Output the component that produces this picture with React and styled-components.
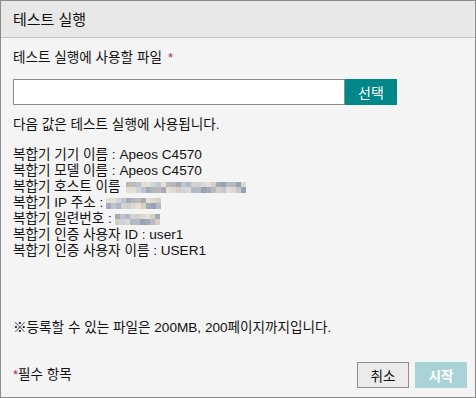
import React from "react";
import styled, { createGlobalStyle } from "styled-components";

const Global = createGlobalStyle`
  html, body { margin: 0; padding: 0; background: #f4f4f4; }
  * { box-sizing: border-box; }
  body { font-family: "Liberation Sans", "Noto Sans CJK KR", sans-serif; color: #111; }
`;

const Dialog = styled.div`
  width: 476px;
  height: 398px;
  border: 1px solid #8c8c8c;
  background: #f4f4f4;
  display: flex;
  flex-direction: column;
`;

const Header = styled.div`
  height: 37px;
  flex: none;
  background: #e8e8e8;
  border-bottom: 1px solid #c6c6c6;
  display: flex;
  align-items: center;
  padding: 0 12px 1px;
  font-size: 15px;
  color: #111;
`;

const Body = styled.div`
  flex: 1;
  display: flex;
  flex-direction: column;
  padding: 12px 8px 9px 12px;
`;

const Line = styled.div`
  font-size: 13.6px;
  line-height: 16px;
  height: 16px;
  white-space: nowrap;
  margin-top: ${(p) => p.$mt || 0}px;
  display: flex;
  align-items: center;
`;

const Req = styled.span`
  color: #b0245a;
  margin-left: ${(p) => p.$ml || 0}px;
  font-size: 13px;
`;

const FileRow = styled.div`
  display: flex;
  margin-top: 13px;
  height: 26px;
`;

const FileInput = styled.div`
  width: 332px;
  height: 26px;
  background: #fff;
  border: 1px solid #8c8c8c;
`;

const SelectBtn = styled.button`
  width: 52px;
  height: 26px;
  border: none;
  background: #00878a;
  color: #fff;
  font-family: inherit;
  font-size: 14px;
  padding: 0;
`;

const List = styled.div`
  margin-top: 14px;
  display: flex;
  flex-direction: column;
`;

const Mosaic = styled.span`
  display: inline-flex;
  flex-direction: column;
  height: 11px;
  margin-left: ${(p) => p.$ml || 0}px;
`;

const MosaicRow = styled.span`
  display: flex;
  height: 5.5px;
`;

const Cell = styled.span`
  width: 5px;
  height: 100%;
`;

const Spacer = styled.div`
  flex: 1;
`;

const Footer = styled.div`
  display: flex;
  align-items: center;
  margin-top: 26px;
  height: 26px;
`;

const Btn = styled.button`
  width: 52px;
  height: 26px;
  margin-left: ${(p) => p.$ml || 0}px;
  font-family: inherit;
  font-size: 13.6px;
  padding: 0;
  border: ${(p) => (p.$primary ? "none" : "1px solid #8c8c8c")};
  background: ${(p) => (p.$primary ? "#a9d3d6" : "#ebebeb")};
  color: ${(p) => (p.$primary ? "#ffffff" : "#111")};
  font-weight: ${(p) => (p.$primary ? 700 : 400)};
`;

const palette = ["#c6c8d0", "#b4bac6", "#dcd8d2", "#a4aab8", "#ced4dc", "#c2b8b0", "#e2ddd6", "#98a2b2", "#d6cfc4", "#b0b8c4", "#e6e0d4", "#bcc4cf"];

function Blur({ width, ml, seed }) {
  const n = Math.round(width / 5);
  const rows = [0, 1].map((r) =>
    Array.from({ length: n }, (_, i) => palette[(i * 7 + r * 5 + seed * 5 + ((i * i) % 5)) % palette.length])
  );
  return (
    <Mosaic $ml={ml}>
      {rows.map((row, r) => (
        <MosaicRow key={r}>
          {row.map((c, i) => (
            <Cell key={i} style={{ background: c }} />
          ))}
        </MosaicRow>
      ))}
    </Mosaic>
  );
}

export default function App() {
  return (
    <>
      <Global />
      <Dialog>
        <Header>테스트 실행</Header>
        <Body>
          <Line>
            테스트 실행에 사용할 파일<Req $ml={6}>*</Req>
          </Line>
          <FileRow>
            <FileInput />
            <SelectBtn>선택</SelectBtn>
          </FileRow>
          <Line $mt={12}>다음 값은 테스트 실행에 사용됩니다.</Line>
          <List>
            <Line>복합기 기기 이름 : Apeos C4570</Line>
            <Line>복합기 모델 이름 : Apeos C4570</Line>
            <Line>
              복합기 호스트 이름<Blur width={120} ml={5} seed={1} />
            </Line>
            <Line>
              복합기 IP 주소 :<Blur width={55} ml={3} seed={2} />
            </Line>
            <Line>
              복합기 일련번호 :<Blur width={45} ml={3} seed={3} />
            </Line>
            <Line>복합기 인증 사용자 ID : user1</Line>
            <Line>복합기 인증 사용자 이름 : USER1</Line>
          </List>
          <Spacer />
          <Line>※등록할 수 있는 파일은 200MB, 200페이지까지입니다.</Line>
          <Footer>
            <Line>
              <Req>*</Req>필수 항목
            </Line>
            <Spacer />
            <Btn>취소</Btn>
            <Btn $primary $ml={6}>시작</Btn>
          </Footer>
        </Body>
      </Dialog>
    </>
  );
}
